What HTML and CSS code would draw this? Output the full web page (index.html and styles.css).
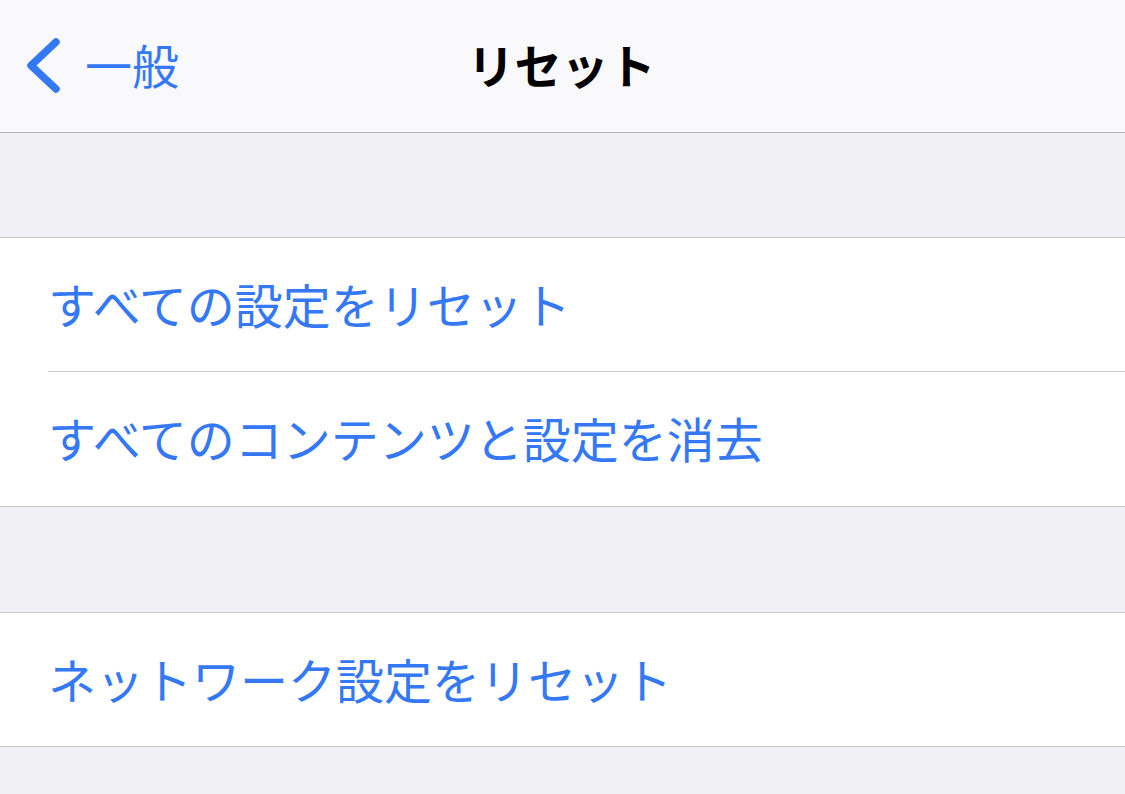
FILE: index.html
```html
<!DOCTYPE html>
<html lang="ja">
<head>
<meta charset="utf-8">
<link rel="stylesheet" href="styles.css">
</head>
<body>
<header class="nav">
  <div class="back">
    <svg class="chev" width="64" height="132" viewBox="0 0 64 132"><path d="M56 42 L31 65.5 L56 89" fill="none" stroke="#3478f6" stroke-width="7.5" stroke-linecap="round" stroke-linejoin="round"/></svg>
    <span class="back-label">一般</span>
  </div>
  <h1 class="title">リセット</h1>
</header>
<div class="spacer"></div>
<section class="group">
  <div class="row">すべての設定をリセット</div>
  <div class="sep"></div>
  <div class="row tall">すべてのコンテンツと設定を消去</div>
</section>
<div class="spacer wide"></div>
<section class="group">
  <div class="row">ネットワーク設定をリセット</div>
</section>
</body>
</html>
```

FILE: styles.css
```css
html, body {
  margin: 0;
  padding: 0;
}
body {
  background: #f0f0f5;
  font-family: "Noto Sans CJK JP", "Noto Sans", sans-serif;
  width: 1125px;
  height: 794px;
  overflow: hidden;
}
.nav {
  height: 132px;
  background: #f9f9fb;
  border-bottom: 1px solid #b4b4b8;
  position: relative;
  display: flex;
  align-items: center;
  justify-content: center;
}
.back {
  position: absolute;
  left: 0;
  top: 0;
  height: 132px;
  display: flex;
  align-items: center;
  gap: 21px;
  color: #3478f6;
}
.chev {
  display: block;
}
.back-label {
  font-size: 47px;
  line-height: 1;
  margin-top: -6px;
}
.title {
  margin: 0;
  font-size: 47px;
  font-weight: 700;
  line-height: 1;
  color: #000;
  margin-top: -6px;
  margin-left: -2px;
}
.spacer {
  height: 104px;
}
.spacer.wide {
  height: 105px;
}
.group {
  background: #fff;
  border-top: 1px solid #c8c7cc;
  border-bottom: 1px solid #c8c7cc;
}
.row {
  height: 133px;
  box-sizing: border-box;
  padding-bottom: 4px;
  display: flex;
  align-items: center;
  padding-left: 48px;
  font-size: 48px;
  color: #3478f6;
  line-height: 1;
}
.row.tall {
  height: 134px;
}
.sep {
  height: 1px;
  background: #c8c7cc;
  margin-left: 48px;
}
```
